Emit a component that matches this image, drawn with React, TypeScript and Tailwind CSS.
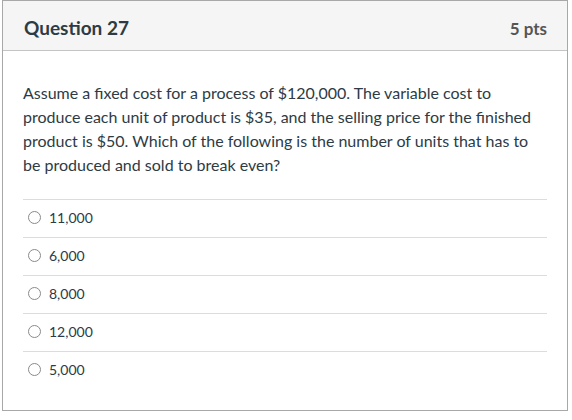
import React from 'react';

const answers = ['11,000', '6,000', '8,000', '12,000', '5,000'];

export default function App() {
  return (
    <div className="w-[572px] h-[420px] bg-white pl-[2px] pr-[4px]" style={{ fontFamily: 'Lato, "Noto Sans", sans-serif' }}>
      <div className="border border-[#a8a8a8] h-[411px] text-[#2d3b45]">
        <div className="h-[50px] bg-[#f5f5f5] border-b border-[#c4c4c4] flex items-center justify-between pl-[21px] pr-[20px] pt-[6px]">
          <span className="text-[19px] font-bold">Question 27</span>
          <span className="text-[17px] font-bold text-[#555]">5 pts</span>
        </div>
        <div className="px-[20px] pt-[30px]">
          <p className="text-[16px] leading-[24px] pr-[8px]">
            Assume a fixed cost for a process of $120,000. The variable cost to produce each unit of product is $35, and the selling price for the finished product is $50. Which of the following is the number of units that has to be produced and sold to break even?
          </p>
          <div className="mt-[22px]">
            {answers.map((a) => (
              <div key={a} className="h-[38px] border-t border-[#dcdcdc] flex items-center pl-[5px] gap-[8px] pb-[2px]">
                <span className="w-[13px] h-[13px] rounded-full border border-[#8a8a8a] bg-white" />
                <span className="text-[14px]">{a}</span>
              </div>
            ))}
          </div>
        </div>
      </div>
    </div>
  );
}
